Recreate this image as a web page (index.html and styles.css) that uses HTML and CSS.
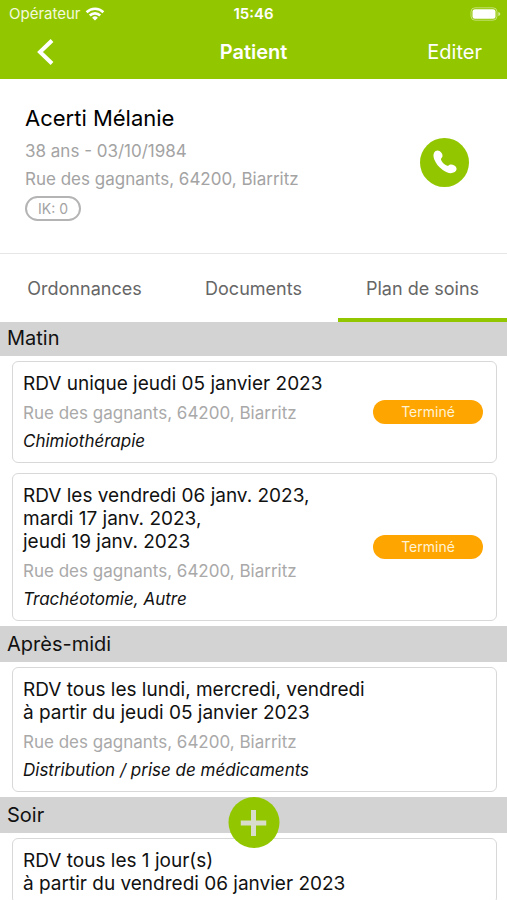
FILE: index.html
```html
<!DOCTYPE html>
<html lang="fr">
<head>
<meta charset="utf-8">
<meta name="viewport" content="width=device-width, initial-scale=1">
<title>Patient</title>
<link rel="stylesheet" href="styles.css">
</head>
<body>
<div class="app">
  <header class="header">
    <div class="status">
      <span class="carrier">Opérateur
        <svg width="20" height="14" viewBox="0 0 20 14" aria-hidden="true"><g fill="none" stroke="#fff" stroke-width="2.6"><path d="M1.600 5.200a12 12 0 0 1 16.800 0"/><path d="M4.800 8.500a7.400 7.400 0 0 1 10.400 0"/></g><path d="M10 13.600 7.100 10.700a4.100 4.100 0 0 1 5.800 0z" fill="#fff"/></svg>
      </span>
      <span class="clock">15:46</span>
      <svg class="battery" width="31" height="14" viewBox="0 0 31 14" aria-hidden="true"><rect x="1" y=".8" width="26" height="12.400" rx="4" fill="none" stroke="#fff" stroke-opacity=".45"/><rect x="2.500" y="2.300" width="23" height="9.400" rx="2.500" fill="#fff"/><path d="M28.300 5q2 .7 2 2t-2 2z" fill="#fff" opacity=".6"/></svg>
    </div>
    <nav class="navbar">
      <button class="back" type="button" aria-label="Retour"><svg width="18" height="26" viewBox="0 0 18 26"><path d="M16 1.500 4 13l12 11.500" fill="none" stroke="#fff" stroke-width="4"/></svg></button>
      <h1>Patient</h1>
      <button class="edit" type="button">Editer</button>
    </nav>
  </header>

  <section class="patient">
    <div>
      <h2>Acerti Mélanie</h2>
      <p>38 ans - 03/10/1984</p>
      <p>Rue des gagnants, 64200, Biarritz</p>
      <span class="ik">IK: 0</span>
    </div>
    <button class="call" type="button" aria-label="Appeler"><svg width="26" height="26" viewBox="0 0 26 26"><path d="M2.200 3.600C3.200 1.700 5.600 1 7.500 2.100c1.700 1 3.400 3.300 3 5.200-.3 1.500-1.700 1.900-1.500 3.200.4 2.200 3.700 5.400 6.200 6.300 1.300.4 1.700-1 3.200-1.300 1.900-.4 4.500.9 5.600 2.500 1.200 1.800.5 4-1.300 5.100-3.200 2-7.600 1.300-11.900-2C6.500 17.800 3.600 14.200 2.200 10.300 1.300 7.800 1.200 5.500 2.200 3.600z" fill="#fff"/></svg></button>
  </section>

  <nav class="tabs">
    <a href="#ordonnances">Ordonnances</a>
    <a href="#documents">Documents</a>
    <a href="#plan" class="active" aria-current="page">Plan de soins</a>
  </nav>

  <main class="plan" id="plan">
    <h3>Matin</h3>
    <div class="cards">
      <article class="card">
        <div>
          <h4>RDV unique jeudi 05 janvier 2023</h4>
          <p class="address">Rue des gagnants, 64200, Biarritz</p>
          <p class="care">Chimiothérapie</p>
        </div>
        <span class="badge">Terminé</span>
      </article>
      <article class="card">
        <div>
          <h4>RDV les vendredi 06 janv. 2023,<br>mardi 17 janv. 2023,<br>jeudi 19 janv. 2023</h4>
          <p class="address">Rue des gagnants, 64200, Biarritz</p>
          <p class="care">Trachéotomie, Autre</p>
        </div>
        <span class="badge">Terminé</span>
      </article>
    </div>
    <h3>Après-midi</h3>
    <div class="cards">
      <article class="card">
        <div>
          <h4>RDV tous les lundi, mercredi, vendredi<br>à partir du jeudi 05 janvier 2023</h4>
          <p class="address">Rue des gagnants, 64200, Biarritz</p>
          <p class="care">Distribution / prise de médicaments</p>
        </div>
      </article>
    </div>
    <h3>Soir</h3>
    <div class="cards">
      <article class="card">
        <div>
          <h4>RDV tous les 1 jour(s)<br>à partir du vendredi 06 janvier 2023</h4>
        </div>
      </article>
    </div>
  </main>
  <button class="add" type="button" aria-label="Ajouter"><svg width="26" height="26" viewBox="0 0 26 26"><path d="M13 0v26M0 13h26" stroke="#d8dccb" stroke-width="5"/></svg></button>
</div>
</body>
</html>
```

FILE: styles.css
```css
* { box-sizing: border-box; }

body, h1, h2, h3, h4, p { margin: 0; font-weight: 400; }

body {
  font-family: Inter, "Liberation Sans", sans-serif;
  font-size: 17px;
  color: #111;
  background: #fff;
}

button {
  border: 0;
  padding: 0;
  background: none;
  color: inherit;
  font: inherit;
  cursor: pointer;
}

svg { display: block; }

.app {
  position: relative;
  display: flex;
  flex-direction: column;
  height: 100vh;
  overflow: hidden;
}

.header {
  flex: none;
  background: #92c700;
  color: #fff;
}

.status, .navbar {
  display: grid;
  grid-template-columns: 1fr auto 1fr;
  align-items: center;
}

.status {
  height: 27px;
  font-size: 15px;
}

.carrier {
  display: flex;
  align-items: center;
  gap: 4px;
  padding-left: 9px;
  color: #f2f9dd;
}

.clock { font-weight: 600; }

.battery {
  justify-self: end;
  margin-right: 6px;
}

.navbar {
  height: 52px;
  padding-bottom: 3px;
  font-size: 20px;
}

.navbar h1 {
  font-size: 20px;
  font-weight: 600;
}

.back {
  justify-self: start;
  margin-left: 36px;
}

.edit {
  justify-self: end;
  margin-right: 25px;
}

.patient {
  flex: none;
  display: flex;
  align-items: center;
  justify-content: space-between;
  padding: 24px 38px 32px 25px;
  border-bottom: 1px solid #e6e6e6;
}

.patient h2 {
  font-size: 22px;
  line-height: 30px;
  margin-bottom: 4px;
  color: #000;
}

.patient p {
  line-height: 28px;
  color: #a3a3a3;
}

.ik {
  display: inline-block;
  margin-top: 3px;
  padding: 0 11px;
  border: 2px solid #b4b4b4;
  border-radius: 13px;
  font-size: 14px;
  line-height: 21px;
  color: #a3a3a3;
}

.call, .add {
  display: grid;
  place-items: center;
  flex: none;
  border-radius: 50%;
  background: #92c700;
}

.call {
  width: 49px;
  height: 49px;
}

.tabs {
  position: relative;
  z-index: 1;
  flex: none;
  display: grid;
  grid-template-columns: repeat(3, 1fr);
  height: 68px;
  background: #fff;
}

.tabs a {
  display: grid;
  place-items: center;
  border-bottom: 4px solid transparent;
  padding-top: 4px;
  font-size: 18px;
  color: #666;
  text-decoration: none;
}

.tabs .active { border-color: #92c700; }

.plan {
  flex: 1;
  min-height: 0;
  margin-top: -2px;
  overflow-y: auto;
  scrollbar-width: none;
}

.plan h3 {
  padding: 0 7px;
  font-size: 20px;
  line-height: 36px;
  background: #d3d3d3;
}

.cards {
  display: grid;
  gap: 10px;
  padding: 5px 10px 5px 12px;
}

.card {
  display: flex;
  align-items: center;
  justify-content: space-between;
  padding: 10px 13px 8px 10px;
  border: 1px solid #d8d8d8;
  border-radius: 6px;
}

.card h4 {
  margin-bottom: 4px;
  font-size: 19px;
  line-height: 23px;
}

.card h4:last-child { margin-bottom: 0; }

.address, .care { line-height: 28px; }
.address { color: #a9a9a9; }

.care {
  margin-bottom: -1px;
  font-style: italic;
}

.badge {
  flex: none;
  width: 110px;
  margin-bottom: 3px;
  border-radius: 12px;
  background: #ffa500;
  color: #fff3d6;
  font-size: 14px;
  line-height: 24px;
  text-align: center;
}

.add {
  position: absolute;
  bottom: 52px;
  left: 50%;
  width: 51px;
  height: 51px;
  transform: translateX(-50%);
}
```
